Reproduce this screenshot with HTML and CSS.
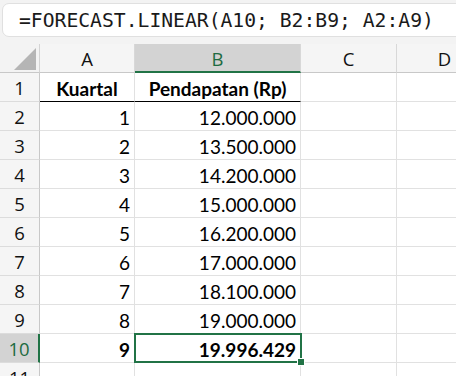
FILE: index.html
```html
<!DOCTYPE html>
<html lang="id">
<head>
  <meta charset="UTF-8">
  <meta name="viewport" content="width=device-width, initial-scale=1.0">
  <title>Forecast Linear</title>
  <link rel="stylesheet" href="styles.css">
</head>
<body>

<div class="toolbar">
  <div class="formula-bar">=FORECAST.LINEAR(A10; B2:B9; A2:A9)</div>
</div>

<div class="sheet">
  <!-- Baris judul kolom -->
  <div class="corner"><span class="corner-tri"></span></div>
  <div class="col-head">A</div>
  <div class="col-head active">B</div>
  <div class="col-head">C</div>
  <div class="col-head">D</div>

  <div class="row-head">1</div>
  <div class="cell center bold under">Kuartal</div>
  <div class="cell center bold under">Pendapatan (Rp)</div>
  <div class="cell"></div>
  <div class="cell"></div>

  <div class="row-head">2</div>
  <div class="cell">1</div>
  <div class="cell">12.000.000</div>
  <div class="cell"></div>
  <div class="cell"></div>

  <div class="row-head">3</div>
  <div class="cell">2</div>
  <div class="cell">13.500.000</div>
  <div class="cell"></div>
  <div class="cell"></div>

  <div class="row-head">4</div>
  <div class="cell">3</div>
  <div class="cell">14.200.000</div>
  <div class="cell"></div>
  <div class="cell"></div>

  <div class="row-head">5</div>
  <div class="cell">4</div>
  <div class="cell">15.000.000</div>
  <div class="cell"></div>
  <div class="cell"></div>

  <div class="row-head">6</div>
  <div class="cell">5</div>
  <div class="cell">16.200.000</div>
  <div class="cell"></div>
  <div class="cell"></div>

  <div class="row-head">7</div>
  <div class="cell">6</div>
  <div class="cell">17.000.000</div>
  <div class="cell"></div>
  <div class="cell"></div>

  <div class="row-head">8</div>
  <div class="cell">7</div>
  <div class="cell">18.100.000</div>
  <div class="cell"></div>
  <div class="cell"></div>

  <div class="row-head">9</div>
  <div class="cell">8</div>
  <div class="cell">19.000.000</div>
  <div class="cell"></div>
  <div class="cell"></div>

  <div class="row-head active">10</div>
  <div class="cell bold">9</div>
  <div class="cell bold selected">19.996.429</div>
  <div class="cell"></div>
  <div class="cell"></div>

  <div class="row-head">11</div>
  <div class="cell"></div>
  <div class="cell"></div>
  <div class="cell"></div>
  <div class="cell"></div>
</div>

</body>
</html>
```

FILE: styles.css
```css
body {
  margin: 0;
  background-color: #fff;
  overflow: hidden;
  font-family: Lato, "Open Sans", sans-serif;
  color: #000;
}

/* Barre de formule */
.toolbar {
  background-color: #f3f3f3;
  height: 44px;
  padding: 3px 0 0 2px;
  box-sizing: border-box;
}

.formula-bar {
  height: 34px;
  margin-right: -20px;
  box-sizing: border-box;
  background-color: #fff;
  border: 1px solid #e0e0e0;
  border-radius: 7px;
  padding-left: 16px;
  display: flex;
  align-items: center;
  font-family: "DejaVu Sans Mono", monospace;
  font-size: 19.7px;
  color: #1a1a1a;
  white-space: nowrap;
}

/* Grille */
.sheet {
  display: grid;
  grid-template-columns: 40px 95px 166px 96px 96px;
  grid-auto-rows: 29px;
}

.sheet > div {
  box-sizing: border-box;
}

.corner {
  background-color: #f3f3f3;
  border-right: 1px solid #d4d4d4;
  border-bottom: 1px solid #c8c8c8;
  position: relative;
}

.corner-tri {
  position: absolute;
  right: 3px;
  bottom: 2px;
  width: 0;
  height: 0;
  border-left: 22px solid transparent;
  border-bottom: 22px solid #b5b5b5;
}

.col-head {
  background-color: #f5f5f5;
  border-right: 1px solid #d8d8d8;
  border-bottom: 1px solid #c8c8c8;
  display: flex;
  align-items: center;
  justify-content: center;
  font-family: "Open Sans", sans-serif;
  font-size: 18.5px;
  color: #111;
  padding-top: 1px;
}

.col-head.active {
  background-color: #d3d3d3;
  color: #1e6b41;
  border-bottom: 2px solid #217346;
}

.row-head {
  background-color: #f5f5f5;
  border-right: 1px solid #c8c8c8;
  border-bottom: 1px solid #dcdcdc;
  display: flex;
  align-items: flex-end;
  justify-content: center;
  font-family: "Open Sans", sans-serif;
  font-size: 18.5px;
  line-height: 1;
  padding-bottom: 4px;
  color: #111;
}

.row-head.active {
  background-color: #d3d3d3;
  color: #1e6b41;
  border-right: 2px solid #217346;
}

.cell {
  border-right: 1px solid #e1e1e1;
  border-bottom: 1px solid #e1e1e1;
  display: flex;
  align-items: flex-end;
  justify-content: flex-end;
  padding: 0 4px 3px 4px;
  font-size: 19px;
  line-height: 1;
  white-space: nowrap;
  position: relative;
}

.center {
  justify-content: center;
}

.bold {
  font-weight: bold;
}

.under {
  border-bottom: 1px solid #000;
}

/* Cellule sélectionnée */
.selected::after {
  content: "";
  position: absolute;
  left: -1px;
  top: -1px;
  right: -2px;
  bottom: -1px;
  border: 2px solid #217346;
}

.selected::before {
  content: "";
  position: absolute;
  right: -5px;
  bottom: -4px;
  width: 6px;
  height: 6px;
  background-color: #217346;
  border: 1px solid #fff;
  z-index: 1;
}
```
